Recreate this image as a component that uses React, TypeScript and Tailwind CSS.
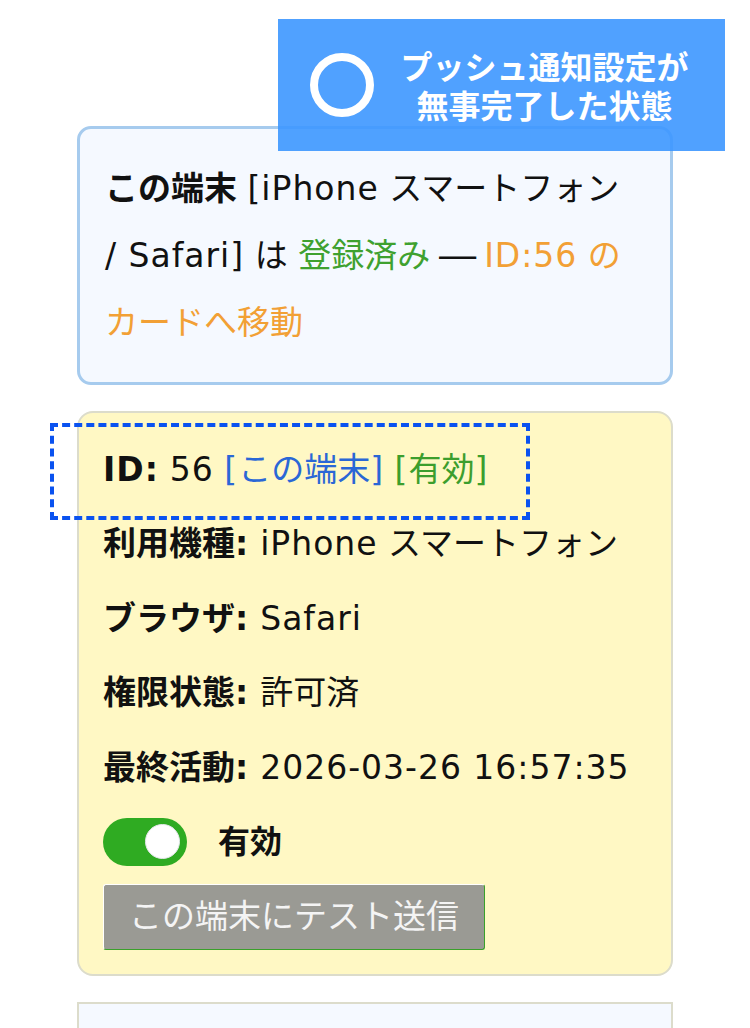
import React, { useState } from 'react';

const font = { fontFamily: '"DejaVu Sans", "Noto Sans CJK JP", sans-serif' };
const jp = { fontFamily: '"Noto Sans CJK JP", sans-serif' };

// latin runs are a bit looser than the japanese ones
const L: React.FC<{ children: React.ReactNode }> = ({ children }) => (
  <span className="tracking-[0.03em]">{children}</span>
);

interface RowProps {
  label: React.ReactNode;
  children: React.ReactNode;
}

const Row: React.FC<RowProps> = ({ label, children }) => (
  <div className="h-[74.5px] flex items-center whitespace-nowrap">
    <span className="font-bold">{label}:</span>
    <span className="ml-[12px]">{children}</span>
  </div>
);

const App: React.FC = () => {
  const [enabled, setEnabled] = useState(true);

  return (
    <div className="relative min-h-[1028px] bg-white text-[#111]" style={font}>
      {/* status banner */}
      <div className="absolute left-[278px] top-[19px] w-[447px] h-[132px] bg-[#3d97ff]/90 flex items-center z-20" style={jp}>
        <div className="ml-[32px] w-[64px] h-[64px] rounded-full border-[8px] border-white shrink-0" />
        <div className="flex-1 text-center text-white font-bold text-[32px] leading-[39px] pr-[10px]">
          <p>プッシュ通知設定が</p>
          <p>無事完了した状態</p>
        </div>
      </div>

      <div className="w-[596px] mx-auto pt-[126px] flex flex-col gap-[26px]">
        {/* current device notice */}
        <div className="rounded-[14px] border-[3px] border-[#a6cbee] bg-[#f5f9ff] px-[25px] py-[26px] text-[33px] leading-[67px] whitespace-nowrap">
          <span className="font-bold">この端末</span> <L>[iPhone</L> スマートフォン
          <br />
          <L>/ Safari]</L> は <span className="text-[#3fa12f]">登録済み</span> <span className="inline-block scale-x-125">—</span>{' '}
          <span className="text-[#f2a035]"><L>ID:56</L> の</span>
          <br />
          <span className="text-[#f2a035]">カードへ移動</span>
        </div>

        {/* device card */}
        <div className="relative rounded-[16px] border-2 border-[#dcdccb] bg-[#fff8c4] px-[24px] pt-[19px] pb-[24px] text-[33px]">
          <div className="absolute left-[-29px] top-[10px] w-[480px] h-[97px] border-[4px] border-dashed border-[#0a52f0]" />
          <Row label={<L>ID</L>}>
            <L>56</L> <span className="text-[#2a67d6]"><L>[</L>この端末<L>]</L></span> <span className="text-[#3c9e2d]"><L>[</L>有効<L>]</L></span>
          </Row>
          <Row label="利用機種">
            <L>iPhone</L> スマートフォン
          </Row>
          <Row label="ブラウザ">
            <L>Safari</L>
          </Row>
          <Row label="権限状態">許可済</Row>
          <Row label="最終活動">
            <L>2026-03-26 16:57:35</L>
          </Row>

          <div className="mt-[13px] flex items-center gap-[31px]">
            <button
              onClick={() => setEnabled((prev) => !prev)}
              className={`w-[84px] h-[48px] rounded-full flex items-center px-[7px] ${enabled ? 'bg-[#2fab22] justify-end' : 'bg-gray-400 justify-start'}`}
            >
              <span className="w-[35px] h-[35px] rounded-full bg-white border border-gray-200" />
            </button>
            <span className="font-bold text-[32px]">有効</span>
          </div>

          <button className="mt-[18px] h-[66px] w-[382px] rounded-[3px] bg-[#9a9a94] border border-t-white border-l-white border-b-[#3aa02a] border-r-[#3aa02a] text-[#f4f4f4] text-[33px]">
            この端末にテスト送信
          </button>
        </div>

        {/* next card */}
        <div className="h-[80px] border-2 border-[#dcdccb] bg-[#f5f9ff]" />
      </div>
    </div>
  );
};

export default App;
